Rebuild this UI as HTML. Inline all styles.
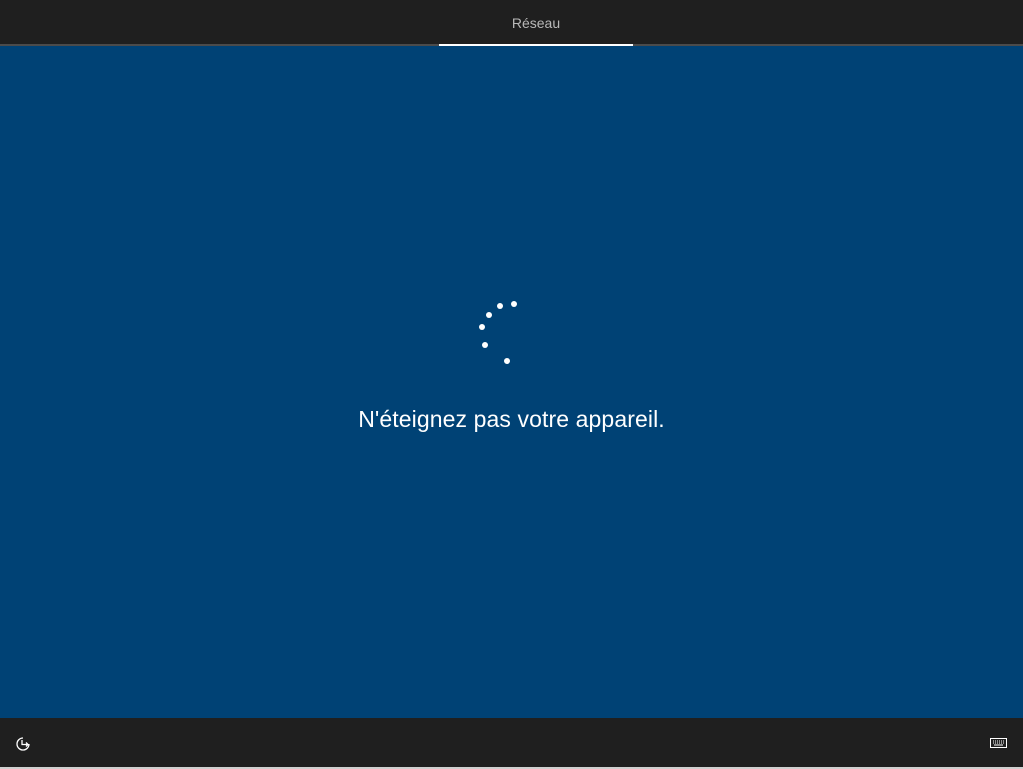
<!DOCTYPE html>
<html><head><meta charset="utf-8"><style>
html,body{margin:0;padding:0;width:1023px;height:769px;overflow:hidden;background:#004275;font-family:"Liberation Sans",sans-serif}
.top{position:absolute;left:0;top:0;width:1023px;height:44px;background:#1f1f1f}
.topline{position:absolute;left:0;top:44px;width:1023px;height:2px;background:#4b4b4b}
.ul{position:absolute;left:439px;top:44px;width:194px;height:2px;background:#fff}
.tab{position:absolute;left:439px;width:194px;top:15px;text-align:center;color:#b8b8b8;font-size:14px}
.msg{position:absolute;left:0;width:1023px;top:406px;text-align:center;color:#fff;font-size:23px;letter-spacing:0.1px}
.bot{position:absolute;left:0;top:718px;width:1023px;height:49px;background:#1f1f1f}
.botline{position:absolute;left:0;top:767px;width:1023px;height:2px;background:#d0d0d0}
.dot{position:absolute;width:6px;height:6px;border-radius:50%;background:#fff}
</style></head><body>
<div class="top"></div><div class="topline"></div><div class="ul"></div>
<div class="tab">Réseau</div>
<div class="dot" style="left:511px;top:301px"></div>
<div class="dot" style="left:497px;top:303px"></div>
<div class="dot" style="left:486px;top:312px"></div>
<div class="dot" style="left:479px;top:324px"></div>
<div class="dot" style="left:482px;top:342px"></div>
<div class="dot" style="left:504px;top:358px"></div>
<div class="msg">N'éteignez pas votre appareil.</div>
<div class="bot"></div><div class="botline"></div>
<svg style="position:absolute;left:14px;top:736px" width="18" height="16" viewBox="0 0 18 16">
<path d="M9 2 A6 6 0 1 0 15 8" fill="none" stroke="#fff" stroke-width="1.3"/>
<path d="M8 4 V8.5 H14 M12 6.5 L14 8.5 L12 10.5" fill="none" stroke="#fff" stroke-width="1.3"/>
</svg>
<svg style="position:absolute;left:990px;top:738px" width="17" height="10" viewBox="0 0 17 10">
<rect x="0.5" y="0.5" width="16" height="9" fill="none" stroke="#fff"/>
<path d="M3 3h1M5 3h1M7 3h1M9 3h1M11 3h1M13 3h1M3 5h1M5 5h1M7 5h1M9 5h1M11 5h1M13 5h1M4 7h9" stroke="#fff" stroke-width="1"/>
</svg>
</body></html>
